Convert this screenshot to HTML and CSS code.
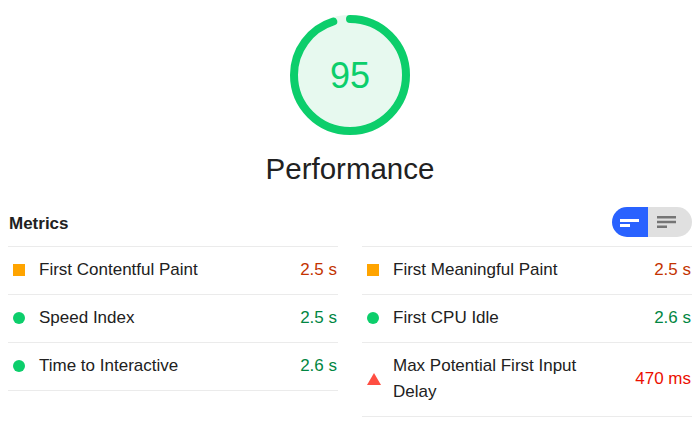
FILE: index.html
```html
<!DOCTYPE html>
<html>
<head>
<meta charset="utf-8">
<link rel="stylesheet" href="styles.css">
</head>
<body>
<div class="report">
  <div class="gauge">
    <div class="gauge-dial">
      <svg class="gauge-svg" viewBox="0 0 120 120" width="120" height="120">
        <circle cx="60" cy="60" r="56" fill="#e7f9ef" stroke="#e7f9ef" stroke-width="8"/>
        <circle cx="60" cy="60" r="56" fill="none" stroke="#0cce6b" stroke-width="8" stroke-linecap="round" stroke-dasharray="334.27 351.86" transform="rotate(-90 60 60)"/>
      </svg>
      <div class="gauge-pct">95</div>
    </div>
    <div class="gauge-label">Performance</div>
  </div>

  <div class="metrics">
    <div class="metrics-header">
      <span class="metrics-title">Metrics</span>
      <div class="toggle">
        <span class="toggle-half toggle-on">
          <svg width="19" height="8" viewBox="0 0 19 8"><rect x="0" y="0" width="19" height="3" fill="#fff"/><rect x="0" y="5" width="10" height="3" fill="#fff"/></svg>
        </span>
        <span class="toggle-half toggle-off">
          <svg width="19" height="12" viewBox="0 0 19 12"><rect x="0" y="0" width="19" height="2.5" fill="#757575"/><rect x="0" y="4.75" width="19" height="2.5" fill="#757575"/><rect x="0" y="9.5" width="10" height="2.5" fill="#757575"/></svg>
        </span>
      </div>
    </div>
    <div class="metric-grid">
      <div class="metric">
        <span class="icon icon-average"></span>
        <span class="metric-name">First Contentful Paint</span>
        <span class="metric-value v-average">2.5&nbsp;s</span>
      </div>
      <div class="metric">
        <span class="icon icon-average"></span>
        <span class="metric-name">First Meaningful Paint</span>
        <span class="metric-value v-average">2.5&nbsp;s</span>
      </div>
      <div class="metric">
        <span class="icon icon-pass"></span>
        <span class="metric-name">Speed Index</span>
        <span class="metric-value v-pass">2.5&nbsp;s</span>
      </div>
      <div class="metric">
        <span class="icon icon-pass"></span>
        <span class="metric-name">First CPU Idle</span>
        <span class="metric-value v-pass">2.6&nbsp;s</span>
      </div>
      <div class="metric">
        <span class="icon icon-pass"></span>
        <span class="metric-name">Time to Interactive</span>
        <span class="metric-value v-pass">2.6&nbsp;s</span>
      </div>
      <div class="metric">
        <span class="icon icon-fail"></span>
        <span class="metric-name">Max Potential First Input Delay</span>
        <span class="metric-value v-fail">470&nbsp;ms</span>
      </div>
    </div>
  </div>
</div>
</body>
</html>
```

FILE: styles.css
```css
html, body {
  margin: 0;
  padding: 0;
  background: #fff;
}
body {
  font-family: "Liberation Sans", Arial, sans-serif;
  color: #212121;
}
.report {
  display: flex;
  flex-direction: column;
}
.gauge {
  display: flex;
  flex-direction: column;
  align-items: center;
  padding-top: 15px;
}
.gauge-dial {
  position: relative;
  width: 120px;
  height: 120px;
}
.gauge-svg {
  display: block;
}
.gauge-pct {
  position: absolute;
  left: 0;
  top: 0;
  width: 120px;
  height: 120px;
  display: flex;
  align-items: center;
  justify-content: center;
  font-size: 36px;
  color: #0cce6b;
  padding-top: 2px;
  box-sizing: border-box;
}
.gauge-label {
  margin-top: 16px;
  font-size: 29.5px;
  line-height: 36px;
  color: #212121;
}
.metrics {
  margin-top: 20px;
  padding: 0 8px;
}
.metrics-header {
  display: flex;
  justify-content: space-between;
  align-items: center;
  height: 30px;
  margin-bottom: 9px;
}
.metrics-title {
  font-weight: bold;
  font-size: 17px;
  padding-top: 3px;
  padding-left: 1px;
}
.toggle {
  display: flex;
  width: 80px;
  height: 30px;
  border-radius: 15px;
  overflow: hidden;
}
.toggle-half {
  flex: 1;
  display: flex;
  align-items: center;
  justify-content: center;
}
.toggle-on {
  background: #2962ff;
}
.toggle-on svg {
  margin-top: 2px;
}
.toggle-off {
  background: #e0e0e0;
  justify-content: flex-start;
  padding-left: 9px;
}
.metric-grid {
  display: grid;
  grid-template-columns: 1fr 1fr;
  column-gap: 24px;
  align-items: start;
}
.metric {
  display: flex;
  align-items: center;
  padding: 10px 0 11px;
  border-bottom: 1px solid #ebebeb;
  font-size: 17px;
  line-height: 26px;
}
.metric:nth-child(-n+2) {
  border-top: 1px solid #ebebeb;
}
.icon {
  flex: none;
  width: 12px;
  height: 12px;
  margin-left: 5px;
  margin-right: 14px;
}
.icon-average {
  background: #ffa400;
}
.icon-pass {
  background: #0cce6b;
  border-radius: 50%;
}
.icon-fail {
  width: 0;
  height: 0;
  margin-left: 5px;
  margin-right: 12px;
  border-left: 7px solid transparent;
  border-right: 7px solid transparent;
  border-bottom: 12px solid #ff4e42;
}
.metric-name {
  flex: 1;
}
.metric-value {
  margin-left: 24px;
  white-space: nowrap;
  padding-right: 1px;
}
.v-average {
  color: #c33300;
}
.v-pass {
  color: #018642;
}
.v-fail {
  color: #eb0f00;
}
```
